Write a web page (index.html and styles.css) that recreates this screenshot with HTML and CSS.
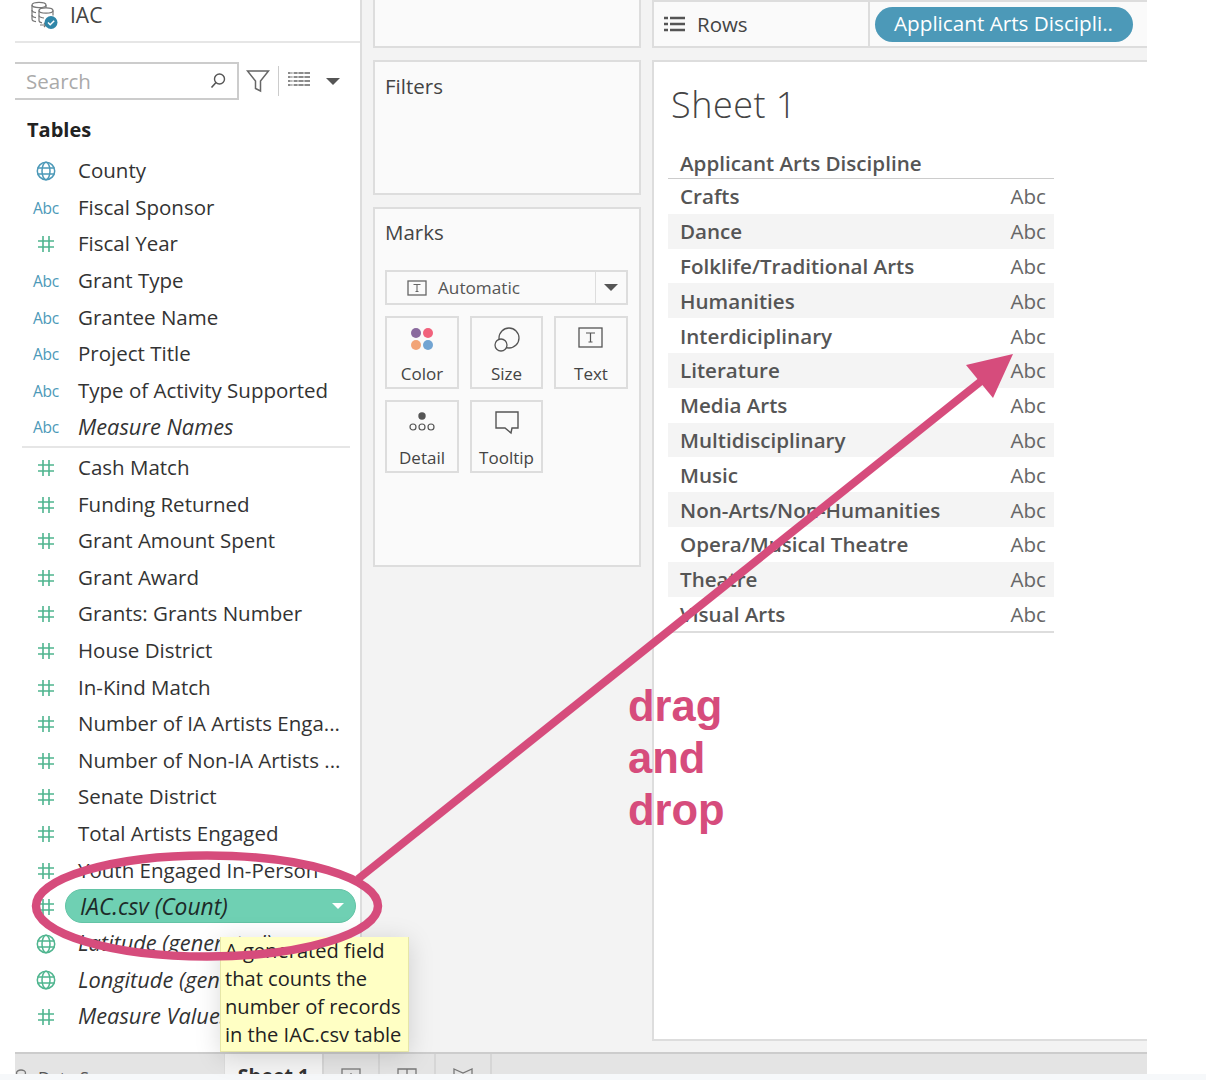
FILE: index.html
```html
<!DOCTYPE html>
<html lang="en">
<head>
    <meta charset="UTF-8">
    <meta name="viewport" content="width=device-width, initial-scale=1.0">
    <title>Sheet 1</title>
    <link rel="stylesheet" href="styles.css">
</head>
<body>
    <svg class="defs" width="0" height="0">
        <symbol id="hash" viewBox="0 0 18 18">
            <path d="M6 1v16M12 1v16M1 6h16M1 12h16" fill="none" stroke="#4fb58f" stroke-width="1.6"/>
        </symbol>
        <symbol id="globe" viewBox="0 0 20 20">
            <g fill="none" stroke="#4c99b8" stroke-width="1.5">
                <circle cx="10" cy="10" r="8.7"/>
                <ellipse cx="10" cy="10" rx="4" ry="8.7"/>
                <path d="M1.5 7h17M1.5 13h17"/>
            </g>
        </symbol>
        <symbol id="globe-green" viewBox="0 0 20 20">
            <g fill="none" stroke="#4fb58f" stroke-width="1.5">
                <circle cx="10" cy="10" r="8.7"/>
                <ellipse cx="10" cy="10" rx="4" ry="8.7"/>
                <path d="M1.5 7h17M1.5 13h17"/>
            </g>
        </symbol>
    </svg>

    <div class="app">
        <div class="main">
            <!-- data pane -->
            <aside class="data-pane">
                <div class="source">
                    <svg class="source-icon" width="30" height="30" viewBox="0 0 30 30">
                        <g fill="none" stroke="#777" stroke-width="1.2">
                            <ellipse cx="10" cy="5" rx="7" ry="2.6"/>
                            <path d="M3 5v14c0 1.5 2 2.4 4 2.6M17 5v3"/>
                            <path d="M3 10c0 1.5 2 2.4 4 2.6M3 15c0 1.5 2 2.4 4 2.6"/>
                            <ellipse cx="17" cy="10.5" rx="7" ry="2.6"/>
                            <path d="M10 10.5v10c0 1.4 2 2.2 3 2.4M24 10.5v5"/>
                            <path d="M10 15.500c0 1.500 3 2.500 5 2.500"/>
                            <path d="M11 25h6M15 23l2 2-2 2"/>
                        </g>
                        <circle cx="22" cy="22.500" r="6.500" fill="#2f86a8"/>
                        <path d="M19 22.500l2.200 2.200 4-4" fill="none" stroke="#fff" stroke-width="1.500"/>
                    </svg>
                    <span class="source-name">IAC</span>
                </div>

                <div class="search-row">
                    <div class="search-box">
                        <span class="search-text">Search</span>
                        <svg width="18" height="18" viewBox="0 0 18 18">
                            <circle cx="10.500" cy="7" r="5" fill="none" stroke="#555" stroke-width="1.400"/>
                            <path d="M7 10.500l-4.500 5" stroke="#555" stroke-width="1.600"/>
                        </svg>
                    </div>
                    <svg class="funnel" width="24" height="24" viewBox="0 0 24 24">
                        <path d="M1.500 2h21l-8 10v10l-5-2.500V12z" fill="none" stroke="#666" stroke-width="1.500"/>
                    </svg>
                    <span class="vline"></span>
                    <svg class="list-icon" width="22" height="18" viewBox="0 0 22 18">
                        <path d="M0 2h22M0 6h22M0 10h22M0 14h22" stroke="#666" stroke-width="1.500"/>
                        <path d="M5 0v16" stroke="#fff" stroke-width="1.200"/>
                        <path d="M3 0v16M10 0v16M16 0v16" stroke="#fff" stroke-width="0.800"/>
                    </svg>
                    <span class="caret"></span>
                </div>

                <div class="tables-title">Tables</div>

                <ul class="fields">
                    <li><span class="ficon"><svg width="20" height="20"><use href="#globe"/></svg></span>County</li>
                    <li><span class="ficon abc">Abc</span>Fiscal Sponsor</li>
                    <li><span class="ficon"><svg width="18" height="18"><use href="#hash"/></svg></span>Fiscal Year</li>
                    <li><span class="ficon abc">Abc</span>Grant Type</li>
                    <li><span class="ficon abc">Abc</span>Grantee Name</li>
                    <li><span class="ficon abc">Abc</span>Project Title</li>
                    <li><span class="ficon abc">Abc</span>Type of Activity Supported</li>
                    <li class="generated"><span class="ficon abc">Abc</span>Measure Names</li>
                </ul>
                <hr class="fields-sep">
                <ul class="fields">
                    <li><span class="ficon"><svg width="18" height="18"><use href="#hash"/></svg></span>Cash Match</li>
                    <li><span class="ficon"><svg width="18" height="18"><use href="#hash"/></svg></span>Funding Returned</li>
                    <li><span class="ficon"><svg width="18" height="18"><use href="#hash"/></svg></span>Grant Amount Spent</li>
                    <li><span class="ficon"><svg width="18" height="18"><use href="#hash"/></svg></span>Grant Award</li>
                    <li><span class="ficon"><svg width="18" height="18"><use href="#hash"/></svg></span>Grants: Grants Number</li>
                    <li><span class="ficon"><svg width="18" height="18"><use href="#hash"/></svg></span>House District</li>
                    <li><span class="ficon"><svg width="18" height="18"><use href="#hash"/></svg></span>In-Kind Match</li>
                    <li><span class="ficon"><svg width="18" height="18"><use href="#hash"/></svg></span>Number of IA Artists Enga...</li>
                    <li><span class="ficon"><svg width="18" height="18"><use href="#hash"/></svg></span>Number of Non-IA Artists ...</li>
                    <li><span class="ficon"><svg width="18" height="18"><use href="#hash"/></svg></span>Senate District</li>
                    <li><span class="ficon"><svg width="18" height="18"><use href="#hash"/></svg></span>Total Artists Engaged</li>
                    <li><span class="ficon"><svg width="18" height="18"><use href="#hash"/></svg></span>Youth Engaged In-Person</li>
                    <li class="generated">
                        <span class="ficon"><svg width="18" height="18"><use href="#hash"/></svg></span>
                        <div class="count-pill">IAC.csv (Count)<span class="caret caret-white"></span></div>
                    </li>
                    <li class="generated"><span class="ficon"><svg width="20" height="20"><use href="#globe-green"/></svg></span>Latitude (generated)</li>
                    <li class="generated"><span class="ficon"><svg width="20" height="20"><use href="#globe-green"/></svg></span>Longitude (generated)</li>
                    <li class="generated"><span class="ficon"><svg width="18" height="18"><use href="#hash"/></svg></span>Measure Values</li>
                </ul>
            </aside>

            <!-- shelves and marks -->
            <section class="cards">
                <div class="card pages"></div>
                <div class="card filters"><h2>Filters</h2></div>
                <div class="card marks">
                    <h2>Marks</h2>
                    <div class="mark-select">
                        <div class="mark-type">
                            <svg width="20" height="16" viewBox="0 0 20 16">
                                <rect x="1" y="1" width="18" height="14" fill="none" stroke="#666" stroke-width="1.300"/>
                                <path d="M6.500 4.500h7M10 4.500v7M8.500 11.500h3" fill="none" stroke="#666" stroke-width="1.100"/>
                            </svg>
                            Automatic
                        </div>
                        <div class="mark-arrow"><span class="caret"></span></div>
                    </div>
                    <div class="mark-grid">
                        <div class="mark-btn">
                            <svg width="24" height="24" viewBox="0 0 24 24">
                                <circle cx="6" cy="6" r="5" fill="#8a6a9e"/>
                                <circle cx="18" cy="6" r="5" fill="#f1627c"/>
                                <circle cx="6" cy="18" r="5" fill="#f2a477"/>
                                <circle cx="18" cy="18" r="5" fill="#72a4d2"/>
                            </svg>
                            <span>Color</span>
                        </div>
                        <div class="mark-btn">
                            <svg width="26" height="26" viewBox="0 0 26 26">
                                <circle cx="15" cy="11" r="10" fill="none" stroke="#555" stroke-width="1.300"/>
                                <circle cx="7" cy="18" r="6" fill="#fafafa" stroke="#555" stroke-width="1.300"/>
                            </svg>
                            <span>Size</span>
                        </div>
                        <div class="mark-btn">
                            <svg width="26" height="22" viewBox="0 0 26 22">
                                <rect x="1" y="1" width="23" height="19" fill="none" stroke="#555" stroke-width="1.300"/>
                                <path d="M8 6h9M12.500 6v9M10.500 15h4" fill="none" stroke="#555" stroke-width="1.200"/>
                            </svg>
                            <span>Text</span>
                        </div>
                        <div class="mark-btn">
                            <svg width="28" height="22" viewBox="0 0 28 22">
                                <circle cx="14" cy="5" r="3.700" fill="#555"/>
                                <g fill="none" stroke="#555" stroke-width="1.200">
                                    <circle cx="5" cy="16" r="3"/>
                                    <circle cx="14" cy="16" r="3"/>
                                    <circle cx="23" cy="16" r="3"/>
                                </g>
                            </svg>
                            <span>Detail</span>
                        </div>
                        <div class="mark-btn">
                            <svg width="26" height="24" viewBox="0 0 26 24">
                                <path d="M2 1h22v16h-6l-1 5-6-5H2z" fill="none" stroke="#555" stroke-width="1.400"/>
                            </svg>
                            <span>Tooltip</span>
                        </div>
                    </div>
                </div>
            </section>

            <!-- rows shelf and view -->
            <section class="view-col">
                <div class="rows-shelf">
                    <div class="rows-label">
                        <svg width="21" height="16" viewBox="0 0 21 16">
                            <path d="M0 2h4M0 8h4M0 14h4M6 2h15M6 8h15M6 14h15" stroke="#555" stroke-width="2.400"/>
                        </svg>
                        Rows
                    </div>
                    <div class="rows-pills"><div class="dim-pill">Applicant Arts Discipli..</div></div>
                </div>
                <div class="view">
                    <h1 class="sheet-title">Sheet 1</h1>
                    <div class="crosstab">
                        <div class="ct-head">Applicant Arts Discipline</div>
                        <div class="ct-row"><span>Crafts</span><span class="abc-cell">Abc</span></div>
                        <div class="ct-row"><span>Dance</span><span class="abc-cell">Abc</span></div>
                        <div class="ct-row"><span>Folklife/Traditional Arts</span><span class="abc-cell">Abc</span></div>
                        <div class="ct-row"><span>Humanities</span><span class="abc-cell">Abc</span></div>
                        <div class="ct-row"><span>Interdiciplinary</span><span class="abc-cell">Abc</span></div>
                        <div class="ct-row"><span>Literature</span><span class="abc-cell">Abc</span></div>
                        <div class="ct-row"><span>Media Arts</span><span class="abc-cell">Abc</span></div>
                        <div class="ct-row"><span>Multidisciplinary</span><span class="abc-cell">Abc</span></div>
                        <div class="ct-row"><span>Music</span><span class="abc-cell">Abc</span></div>
                        <div class="ct-row"><span>Non-Arts/Non-Humanities</span><span class="abc-cell">Abc</span></div>
                        <div class="ct-row"><span>Opera/Musical Theatre</span><span class="abc-cell">Abc</span></div>
                        <div class="ct-row"><span>Theatre</span><span class="abc-cell">Abc</span></div>
                        <div class="ct-row"><span>Visual Arts</span><span class="abc-cell">Abc</span></div>
                    </div>
                </div>
            </section>
        </div>

        <div class="tabs">
            <div class="tab tab-source">
                <svg width="12" height="16" viewBox="0 0 12 16"><ellipse cx="6" cy="5" rx="4.500" ry="3" fill="none" stroke="#777" stroke-width="1.300"/></svg>
                Data Source
            </div>
            <div class="tab tab-active">Sheet 1</div>
            <div class="tab tab-icon"><svg width="20" height="18" viewBox="0 0 20 18"><rect x="1" y="1" width="18" height="16" fill="none" stroke="#777" stroke-width="1.300"/><path d="M10 5v8M6 9h8" stroke="#777" stroke-width="1.300"/></svg></div>
            <div class="tab tab-icon"><svg width="20" height="18" viewBox="0 0 20 18"><path d="M1 1h18v16H1zM10 1v16M1 8h18" fill="none" stroke="#777" stroke-width="1.300"/></svg></div>
            <div class="tab tab-icon"><svg width="20" height="18" viewBox="0 0 20 18"><path d="M1 1l9 4 9-4v16H1z" fill="none" stroke="#777" stroke-width="1.300"/></svg></div>
        </div>
    </div>
    <div class="bottom-strip"></div>

    <!-- things lying over the app -->
    <div class="tooltip">A generated field that counts the number of records in the IAC.csv table</div>
    <div class="drag-note">drag<br>and<br>drop</div>
    <svg class="annotation" width="1206" height="1080" viewBox="0 0 1206 1080">
        <ellipse cx="207" cy="906" rx="171" ry="50.500" fill="none" stroke="#d64c7c" stroke-width="8.500"/>
        <path d="M358 879L985 378" stroke="#d64c7c" stroke-width="8" fill="none"/>
        <path d="M1013 354L966 365L993 398z" fill="#d64c7c"/>
    </svg>
</body>
</html>
```

FILE: styles.css
```css
html, body {
    margin: 0;
    padding: 0;
    background-color: white;
}

body {
    position: relative;
    width: 1206px;
    height: 1080px;
    overflow: hidden;
    font-family: "Open Sans", Arial, sans-serif;
    color: #333;
}

.defs {
    position: absolute;
}

.app {
    width: 1132px;
    height: 1074px;
    margin-left: 15px;
    display: flex;
    flex-direction: column;
    overflow: hidden;
}

.bottom-strip {
    height: 6px;
    background-color: #f6f8fa;
}

.main {
    height: 1052px;
    flex-shrink: 0;
    display: flex;
    background-color: #f3f3f3;
}

/* data pane */
.data-pane {
    width: 345px;
    flex-shrink: 0;
    background-color: white;
    border-right: 2px solid #ddd;
}

.source {
    height: 41px;
    border-bottom: 2px solid #e6e6e6;
    display: flex;
    align-items: flex-start;
    padding-left: 14px;
}

.source-icon {
    margin-right: 11px;
}

.source-name {
    font-size: 21px;
    line-height: 30px;
    color: #444;
}

.search-row {
    height: 38px;
    margin-top: 19px;
    display: flex;
    align-items: center;
}

.search-box {
    width: 224px;
    height: 38px;
    box-sizing: border-box;
    border: 2px solid #ccc;
    border-left: none;
    display: flex;
    align-items: center;
    justify-content: space-between;
    padding: 0 10px 0 11px;
}

.search-text {
    font-size: 20.500px;
    color: #aaa;
}

.funnel {
    margin-left: 7px;
}

.vline {
    width: 1px;
    height: 30px;
    background-color: #ccc;
    margin: 0 9px 0 8px;
}

.list-icon {
    margin-bottom: 2px;
}

.caret {
    display: inline-block;
    width: 0;
    height: 0;
    border-left: 7px solid transparent;
    border-right: 7px solid transparent;
    border-top: 7px solid #555;
}

.search-row .caret {
    margin-left: 16px;
}

.tables-title {
    height: 50px;
    margin-top: 2px;
    padding-left: 12px;
    line-height: 56px;
    font-size: 20px;
    font-weight: 700;
    color: #222;
    box-sizing: border-box;
}

.fields {
    list-style: none;
    margin: 0;
    padding: 0;
}

.fields li {
    height: 36.6px;
    display: flex;
    align-items: center;
    font-size: 20.500px;
    color: #333;
    white-space: nowrap;
}

.fields li.generated {
    font-size: 21.800px;
    font-style: italic;
}

.ficon {
    width: 63px;
    flex-shrink: 0;
    box-sizing: border-box;
    padding: 2px 1px 0 0;
    display: flex;
    justify-content: center;
    align-items: center;
    font-style: normal;
}

.fields li.generated .abc,
.abc {
    font-size: 15.500px;
    color: #4c99b8;
    letter-spacing: -0.3px;
}

.fields-sep {
    margin: 1px 10px 1px 7px;
    height: 2px;
    border: none;
    background-color: #e6e6e6;
}

.count-pill {
    width: 291px;
    height: 34px;
    margin-left: -13px;
    padding: 0 11px 0 14px;
    box-sizing: border-box;
    border-radius: 17px;
    border: 1px solid #63c4a6;
    background-color: #6fd0b3;
    display: flex;
    align-items: center;
    justify-content: space-between;
    font-size: 22.800px;
    color: #1d2b28;
}

.caret-white {
    border-top-color: white;
    border-left-width: 6px;
    border-right-width: 6px;
    border-top-width: 6px;
}

/* shelves and marks */
.cards {
    width: 268px;
    flex-shrink: 0;
    margin-left: 11px;
    display: flex;
    flex-direction: column;
    gap: 12px;
}

.card {
    box-sizing: border-box;
    background-color: #fafafa;
    border: 2px solid #ddd;
}

.card h2 {
    margin: 0;
    font-size: 20.500px;
    font-weight: 400;
    color: #444;
}

.pages {
    height: 48px;
    border-top: none;
}

.filters {
    height: 135px;
    padding: 10px 10px;
}

.marks {
    height: 360px;
    padding: 9px 10px;
}

.mark-select {
    width: 243px;
    height: 35px;
    margin-top: 24px;
    box-sizing: border-box;
    border: 2px solid #ddd;
    display: flex;
    background-color: #fafafa;
}

.mark-type {
    flex-grow: 1;
    display: flex;
    align-items: center;
    gap: 11px;
    padding-left: 20px;
    font-size: 17.200px;
    color: #555;
}

.mark-arrow {
    width: 30px;
    border-left: 1px solid #ddd;
    display: flex;
    align-items: center;
    justify-content: center;
}

.mark-grid {
    display: grid;
    grid-template-columns: 74px 73px 74px;
    grid-auto-rows: 73px;
    column-gap: 11px;
    row-gap: 11px;
    margin-top: 11px;
}

.mark-btn {
    box-sizing: border-box;
    border: 2px solid #ddd;
    display: flex;
    flex-direction: column;
    align-items: center;
    padding-top: 9px;
    font-size: 17px;
    color: #444;
    position: relative;
}

.mark-btn span {
    position: absolute;
    bottom: 2px;
}

/* rows shelf and view */
.view-col {
    width: 495px;
    margin-left: 11px;
    display: flex;
    flex-direction: column;
    gap: 12px;
}

.rows-shelf {
    height: 48px;
    box-sizing: border-box;
    background-color: #fafafa;
    border-top: 2px solid #ddd;
    border-bottom: 2px solid #ddd;
    border-left: 2px solid #ddd;
    display: flex;
}

.rows-label {
    width: 216px;
    box-sizing: border-box;
    border-right: 2px solid #ddd;
    display: flex;
    align-items: center;
    gap: 12px;
    padding-left: 10px;
    font-size: 20.500px;
    color: #444;
}

.rows-pills {
    display: flex;
    align-items: center;
    padding-left: 5px;
}

.dim-pill {
    width: 258px;
    height: 35px;
    box-sizing: border-box;
    border-radius: 18px;
    background-color: #4c99b8;
    color: white;
    font-size: 20.700px;
    line-height: 33px;
    padding-left: 19px;
    white-space: nowrap;
}

.view {
    height: 981px;
    box-sizing: border-box;
    background-color: white;
    border-top: 2px solid #ddd;
    border-left: 2px solid #ddd;
    border-bottom: 2px solid #ddd;
}

.sheet-title {
    margin: 18px 0 0 17px;
    height: 50px;
    font-size: 36px;
    line-height: 50px;
    font-weight: 300;
    letter-spacing: 0.5px;
    color: #444;
}

.crosstab {
    width: 386px;
    margin: 20px 0 0 14px;
    border-bottom: 2px solid #ddd;
}

.ct-head {
    height: 28px;
    line-height: 26px;
    padding-left: 12px;
    border-bottom: 1px solid #ccc;
    font-size: 20.600px;
    font-weight: 600;
    color: #555;
}

.ct-row {
    height: 34.800px;
    display: flex;
    align-items: center;
    justify-content: space-between;
    padding: 0 8px 0 12px;
    font-size: 20.600px;
    font-weight: 600;
    color: #555;
}

.ct-row:nth-child(odd) {
    background-color: #f4f4f4;
}

.abc-cell {
    font-weight: 400;
    color: #666;
}

/* bottom tabs, cut off by the window */
.tabs {
    height: 22px;
    flex-shrink: 0;
    box-sizing: border-box;
    display: flex;
    background-color: #e4e4e4;
    border-top: 2px solid #ccc;
    overflow: hidden;
}

.tab {
    box-sizing: border-box;
    border-right: 2px solid #d6d6d6;
    font-size: 17px;
    color: #555;
    padding-top: 11px;
    line-height: 24px;
    white-space: nowrap;
}

.tab-source {
    width: 209px;
    display: flex;
    align-items: flex-start;
    gap: 11px;
    padding-top: 12px;
    border-right: none;
}

.tab-source svg {
    margin-top: 2px;
}

.tab-active {
    width: 100px;
    padding-top: 10px;
    text-align: center;
    background-color: #f4f4f4;
    border-left: 1px solid #ddd;
    font-size: 19.500px;
    font-weight: 700;
    color: #333;
}

.tab-icon {
    width: 56px;
    padding-top: 14px;
    text-align: center;
}

/* annotation and tooltip */
.tooltip {
    position: absolute;
    left: 220px;
    top: 937px;
    width: 189px;
    height: 115px;
    box-sizing: border-box;
    padding: 0 4px;
    background-color: #ffffc4;
    border: 1px solid #e6e6a8;
    border-top: none;
    box-shadow: 0 4px 24px rgba(0, 0, 0, 0.15);
    font-size: 20.100px;
    line-height: 28px;
    color: #222;
}

.drag-note {
    position: absolute;
    left: 628px;
    top: 680px;
    font-family: "Liberation Sans", Arial, sans-serif;
    font-size: 43.500px;
    font-weight: 700;
    line-height: 52px;
    color: #d64c7c;
}

.annotation {
    position: absolute;
    left: 0;
    top: 0;
    pointer-events: none;
}
```
